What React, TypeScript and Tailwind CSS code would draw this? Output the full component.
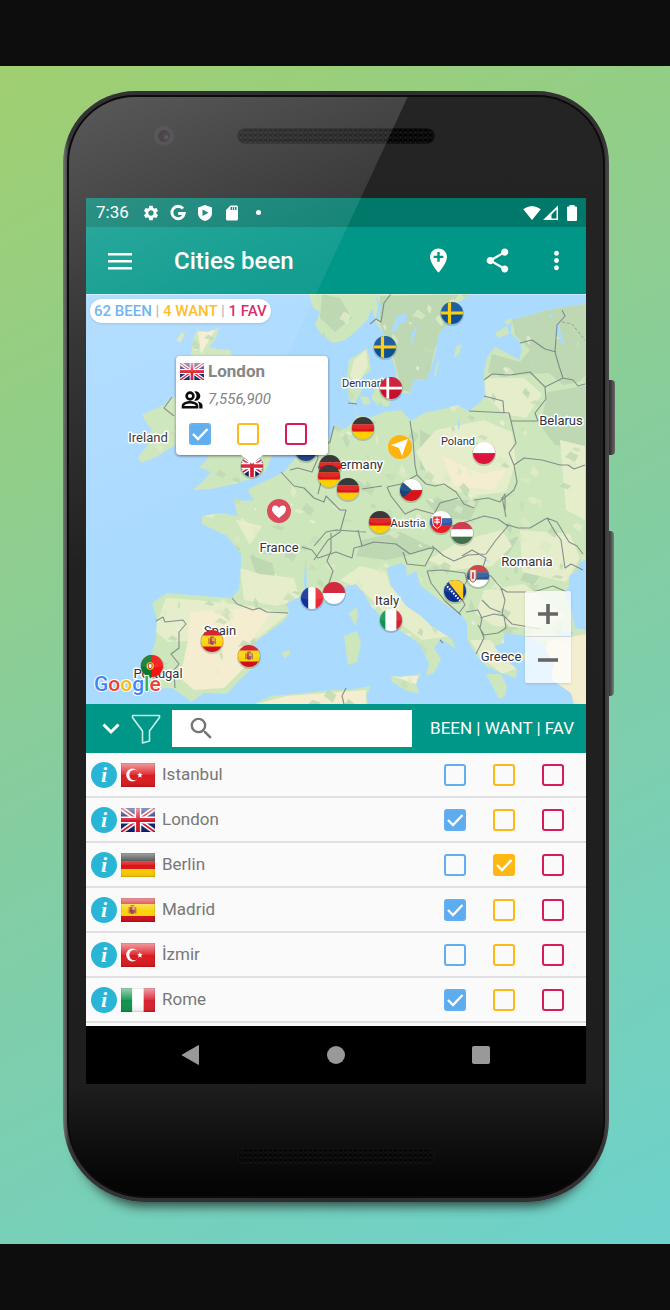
import { useId, useState, type ReactNode } from "react";
import {
  MdAddLocation,
  MdMoreVert,
  MdSdStorage,
  MdSearch,
  MdSettings,
  MdShare,
  MdSignalWifi4Bar,
} from "react-icons/md";

type Mark = "been" | "want" | "fav";
type City = { name: string; flag: string; marks: Mark[] };

const MARKS: Mark[] = ["been", "want", "fav"];

const CITIES: City[] = [
  { name: "Istanbul", flag: "tr", marks: [] },
  { name: "London", flag: "gb", marks: ["been"] },
  { name: "Berlin", flag: "de", marks: ["want"] },
  { name: "Madrid", flag: "es", marks: ["been"] },
  { name: "İzmir", flag: "tr", marks: [] },
  { name: "Rome", flag: "it", marks: ["been"] },
];

/* ---------- Flags: every flag is drawn in a 36 x 24 box ---------- */

const bars = (a: string, b: string, c: string) => (
  <>
    <path fill={a} d="M0 0h36v8H0z" />
    <path fill={b} d="M0 8h36v8H0z" />
    <path fill={c} d="M0 16h36v8H0z" />
  </>
);

const columns = (a: string, b: string, c: string) => (
  <>
    <path fill={a} d="M0 0h12v24H0z" />
    <path fill={b} d="M12 0h12v24H12z" />
    <path fill={c} d="M24 0h12v24H24z" />
  </>
);

const spanishArms = (
  <g>
    <path fill="#a5622a" d="M8 9h1.200v6.500H8zM15 9h1.200v6.500H15z" />
    <path fill="#b8352c" d="M9.500 9h5v4.500q0 2.500-2.500 2.500t-2.500-2.500z" />
    <path fill="#e8a13a" d="M12 9h2.500v3H12z" />
    <path fill="#8c4fa0" d="M12 12h2.500v1.500q0 2-2.500 2.500z" />
    <path fill="#a5622a" d="M9.500 8.600q0-1.800 2.500-1.800t2.500 1.800z" />
  </g>
);

const FLAGS: Record<string, ReactNode> = {
  de: bars("#262626", "#dd1414", "#ffce00"),
  nl: bars("#c8102e", "#ffffff", "#21468b"),
  hu: bars("#cd2a3e", "#ffffff", "#436f4d"),
  it: columns("#0f934c", "#ffffff", "#d9202f"),
  fr: (
    <>
      <path fill="#14309a" d="M0 0h14v24H0z" />
      <path fill="#fff" d="M14 0h8v24h-8z" />
      <path fill="#ef2636" d="M22 0h14v24H22z" />
    </>
  ),
  mc: (
    <>
      <path fill="#cf142b" d="M0 0h36v12H0z" />
      <path fill="#fff" d="M0 12h36v12H0z" />
    </>
  ),
  pl: (
    <>
      <path fill="#fff" d="M0 0h36v12H0z" />
      <path fill="#dc143c" d="M0 12h36v12H0z" />
    </>
  ),
  se: (
    <>
      <path fill="#0b5197" d="M0 0h36v24H0z" />
      <path fill="#fecb00" d="M12.500 0H16v24h-3.500zM0 10.300h36v3.400H0z" />
    </>
  ),
  dk: (
    <>
      <path fill="#c8102e" d="M0 0h36v24H0z" />
      <path fill="#fff" d="M12 0h3v24h-3zM0 10.500h36v3H0z" />
    </>
  ),
  cz: (
    <>
      <path fill="#fff" d="M0 0h36v12H0z" />
      <path fill="#d7141a" d="M0 12h36v12H0z" />
      <path fill="#11457e" d="M2 0l14 12L2 24z" />
    </>
  ),
  es: (
    <>
      <path fill="#d0101c" d="M0 0h36v24H0z" />
      <path fill="#fbd30a" d="M0 6h36v12H0z" />
      {spanishArms}
    </>
  ),
  pt: (
    <>
      <path fill="#f51313" d="M0 0h36v24H0z" />
      <path fill="#0b7a2e" d="M0 0h17v24H0z" />
      <circle cx="15" cy="12" r="4" fill="#f3d322" />
      <path fill="#fff" stroke="#d11" strokeWidth="1" d="M13 9.500h4v3.500q0 1.800-2 1.800t-2-1.800z" />
    </>
  ),
  sk: (
    <>
      {bars("#ffffff", "#2a56ab", "#ee1c25")}
      <path fill="#ee1c25" stroke="#fff" strokeWidth="1" d="M9 5.500h9.500V13q0 4-4.700 6Q9 17 9 13z" />
      <path fill="#fff" d="M13.100 7h1.300v1.800h2v1.200h-2v1.500h2.500v1.200h-2.500v2h-1.300v-2h-2.500v-1.200h2.500V10h-2V8.800h2z" />
    </>
  ),
  rs: (
    <>
      {bars("#c6363c", "#2f5795", "#ffffff")}
      <path fill="#f2e6d8" stroke="#b4483c" strokeWidth="1" d="M8 5h7v9q0 4-3.500 5Q8 18 8 14z" />
      <path fill="#c6363c" d="M10.500 8h2v7h-2z" />
    </>
  ),
  ba: (
    <>
      <path fill="#0b2f8f" d="M0 0h36v24H0z" />
      <path fill="#fcc917" d="M9 0h18v23z" />
      <path stroke="#fff" strokeWidth="2.200" strokeDasharray="1.800 1.500" d="M5 2l20 22" />
    </>
  ),
  tr: (
    <>
      <path fill="#dc1a20" d="M0 0h36v24H0z" />
      <circle cx="12" cy="12" r="6.500" fill="#fff" />
      <circle cx="14" cy="12" r="5.200" fill="#dc1a20" />
      <path fill="#fff" d="M20 9l.8 2.100 2.200.1-1.700 1.400.6 2.200-1.900-1.200-1.900 1.200.6-2.200-1.700-1.400 2.200-.1z" />
    </>
  ),
  gb: (
    <>
      <path fill="#10206f" d="M0 0h36v24H0z" />
      <path stroke="#fff" strokeWidth="5" d="M0 0l36 24M36 0L0 24" />
      <path stroke="#d8182c" strokeWidth="1.800" d="M0 0l36 24M36 0L0 24" />
      <path stroke="#fff" strokeWidth="7" d="M18 0v24M0 12h36" />
      <path stroke="#d8182c" strokeWidth="4" d="M18 0v24M0 12h36" />
    </>
  ),
};

function RectFlag({ code, className }: { code: string; className: string }) {
  const id = useId();
  return (
    <svg viewBox="0 0 36 24" preserveAspectRatio="none" className={className} aria-hidden="true">
      <defs>
        <linearGradient id={id} x1="0" y1="0" x2="0" y2="1">
          <stop offset="0" stopColor="#fff" stopOpacity=".58" />
          <stop offset=".5" stopColor="#fff" stopOpacity=".08" />
          <stop offset=".52" stopColor="#fff" stopOpacity="0" />
          <stop offset="1" stopColor="#000" stopOpacity=".1" />
        </linearGradient>
      </defs>
      {FLAGS[code]}
      <path fill={`url(#${id})`} stroke="#000" strokeOpacity=".18" d="M0 0h36v24H0z" />
    </svg>
  );
}

const PINS: { code: string; x: number; y: number }[] = [
  { code: "se", x: 452, y: 313 },
  { code: "se", x: 385, y: 347 },
  { code: "dk", x: 391, y: 388 },
  { code: "nl", x: 306, y: 450 },
  { code: "de", x: 363, y: 428 },
  { code: "de", x: 330, y: 466 },
  { code: "de", x: 329, y: 476 },
  { code: "de", x: 348, y: 489 },
  { code: "de", x: 380, y: 522 },
  { code: "pl", x: 484, y: 453 },
  { code: "cz", x: 411, y: 490 },
  { code: "sk", x: 441, y: 522 },
  { code: "hu", x: 462, y: 533 },
  { code: "rs", x: 478, y: 576 },
  { code: "ba", x: 455, y: 591 },
  { code: "it", x: 391, y: 620 },
  { code: "mc", x: 334, y: 593 },
  { code: "fr", x: 312, y: 598 },
  { code: "es", x: 212, y: 641 },
  { code: "es", x: 249, y: 656 },
  { code: "pt", x: 152, y: 666 },
  { code: "gb", x: 252, y: 466 },
];

/* Left edge of the 24-unit square shown inside a round pin. */
const PIN_CROP: Record<string, number> = { es: 0, pt: 5, se: 5, dk: 5, cz: 3, rs: 5 };

function Pin({ code, x, y }: { code: string; x: number; y: number }) {
  return (
    <g transform={`translate(${x} ${y})`}>
      <circle cy="1" r="12" fill="#000" fillOpacity=".16" />
      <g clipPath="url(#pin-clip)">
        <svg x="-11" y="-11" width="22" height="22" viewBox={`${PIN_CROP[code] ?? 6} 0 24 24`}>
          {FLAGS[code]}
        </svg>
        <path fill="#fff" fillOpacity=".09" d="M-11 -11h22V0Q0 3-11 0z" />
      </g>
    </g>
  );
}

/* ---------- Map ---------- */

const CONTINENT =
  "M334 425L344 429 350 425 357 417 354 403 349 400 347 377 349 360 357 355 367 348 369 357 371 370 359 380 362 390 355 403 357 416 372 417 384 412 401 410 411 421 424 413 447 408 457 405 469 411 480 402 485 397 484 373 487 357 495 347 507 353 519 360 522 350 520 342 511 333 512 320 531 315 547 310 564 307 585 304V560L579 563 578 570 569 576 569 586 564 595 572 612 575 628 586 630V704H574L571 693 551 679 554 663 541 643 528 636 504 633 504 643 494 646 501 656 517 669 516 678 501 673 486 666 477 656 467 639 467 623 461 614 447 606 434 596 421 586 416 571 407 576 406 566 401 563 387 568 391 586 406 606 421 616 431 626 452 639 456 649 441 639 434 648 441 659 434 673 426 676 429 663 424 653 419 643 404 633 387 623 371 606 364 593 356 584 347 586 331 599 317 603 301 596 287 603 289 613 284 621 259 639 250 650 259 663 244 676 237 683 227 694 204 693 191 702 184 696 172 688 152 689 149 669 151 656 156 639 157 620 152 603 167 593 201 596 232 598 239 589 241 566 241 554 227 536 202 524 202 516 221 513 237 516 234 498 244 501 254 500 247 490 261 483 284 472 291 463 297 457 317 447 331 437z";

const ISLANDS = [
  "M309 294L313 308 320 312 315 325 322 335 333 343 345 340 354 333 367 320 372 308 376 323 384 333 389 350 396 370 397 387 401 393 410 393 414 380 427 379 432 365 436 350 439 333 447 325 461 315 457 303 471 294z",
  "M142 415L150 411 164 405 172 397 185 400 190 420 182 440 172 447 158 456 142 463 138 458 149 443 146 436 152 430 146 422z",
  "M191 353L193 340 197 330 207 332 219 328 216 338 209 347 218 349 231 350 233 370 250 405 270 425 280 445 269 462 266 470 260 476 241 482 225 486 211 489 192 490 201 483 211 472 199 467 205 462 209 455 200 420 195 380z",
  "M176 340L182 332 185 334 180 343z",
  "M454 358L456 347 462 344 459 354z",
  "M434 375L438 360 439 363 435 378z",
  "M371 398L378 382 386 384 394 392 388 407 378 405z",
  "M360 396L368 397 371 404 364 405z",
  "M495 333L507 326 509 334 498 338z",
  "M504 322L510 318 513 321 508 325z",
  "M391 676L401 677 421 674 416 684 419 693 407 691 392 682z",
  "M344 636L357 631 361 643 357 662 348 665 346 650z",
  "M349 613L357 607 358 617 355 626z",
  "M486 674L501 674 507 686 505 696 499 699 494 689z",
  "M281 653L289 650 291 653 285 658z",
  "M254 704L271 696 294 694 334 690 347 690 371 686 366 696 369 704z",
  "M520 655L527 653 528 661 522 659z",
];

const LAND = [CONTINENT, ...ISLANDS].join("");

const FOREST =
  "M380 296L472 294 457 318 435 348 428 379 414 380 410 392 402 390 393 355 380 325zM512 316L585 296V376L579 382 563 385 549 373 519 375 503 377 488 372 492 354 520 362 530 350 515 335zM548 392L585 386V450L555 445 540 425zM322 294L340 298 352 318 335 332 320 318zM362 540L400 532 434 548 406 556 386 560 356 556zM520 580L540 545 556 550 534 585zM500 545L520 535 505 560zM425 500L480 500 470 520 440 518zM250 555L272 563 276 577 256 574zM420 430L440 440 436 470 420 470z";

const MEADOW =
  "M436 430L484 420 512 432 516 462 506 492 472 496 432 482 416 452zM240 568L260 574 294 578 300 600 276 606 244 600zM166 598L196 600 252 606 288 614 258 638 168 642 154 630zM362 590L382 610 422 640 452 636 424 610 390 586 386 572 360 566 340 580zM428 560L462 540 502 530 512 546 492 566 452 570zM484 590L524 584 564 616 534 628 494 626 476 614zM520 530L570 534 580 558 566 582 522 572zM484 378L524 378 542 394 526 418 504 414 486 396zM354 360L366 350 368 366 358 384 350 376zM470 640L490 640 518 668 502 674 480 656zM560 440L585 446V520L566 510zM236 520L262 526 250 545z";

const ARID =
  "M190 612L250 608 270 614 252 640 248 664 224 688 194 690 180 678 188 640zM392 676L418 676 416 684zM545 642L586 634V704H573L553 680zM256 704L286 696 366 690V704zM198 332L215 330 201 354zM442 456L482 474 508 468 494 490 454 486z";

const BORDERS =
  "M391 294l-7 9-3 19-5-3-6 5M520 343l12-3 13 9 11 3M562 310l3 6-8 9-2 27 4 14 4 12M484 380l8-6 18 1 20-3 15 15 18-9 10 2 5 6 7-2M545 387l1 12-11 14 3 8-8 0-19 0M484 396l19 5 1 12M469 411l40 2 2 8 5 22-7 10 5 12 3 17-3 8-12 10M514 465l10-7 18 2 18 5 8 0 6 4 11-4M410 421l3 19 2 25 2 10M387 487l14-3 16-9 9 9 9 2 9-2 12 8 8 12 10 4M387 487l4 9 14 18 11-5 18 5 6-11 18-5M474 500l14-2 12 4 5-8 0 16M434 514v10l18 2 20-6 12-4 14 3 10 7-12 14-10 14-18 1-14 6-10-5-12-10M505 524l13 4 12 0 17-10 10 4 12 20 8 4 6 8M547 518l8 14 6 8 4 28 6-4 12 6M501 588l6 4 26 0 20-6 14 6M501 588l-10-12-12-2M501 588l4 12-3 14 10 10 28 5M362 546l12-4 22 2 14 10 20-6 4 1M358 530l4 16-8 2-2 10-16-6-18 6-6-8-10-3M314 546l12-14 10-2 30 2M403 552l4 12 18 2 9-17M427 571l14-1 24 3 2 8-8 12 6 12-6 8M427 571l4 12 14 18 16 14M466 612l12-2 4 8-2 10 4 10-8 16M480 618l14-4 10 2 2 12-8 5-14 2-6-10M482 600l8 8 10 4M462 556l10-6 14 8-4 12M232 598l5 6 16 6 6-2 8 4 21 1M156 621l7-4 2 5 18-2 3 4-7 8 0 16-8 6 8 10-5 6 1 18M281 472l13 14 10 2 10 10 10 4 2-6 14 14 6 0-6 22-12 8-14 20M290 470l8-2 14 4 6-14-2-8 14-8 4-16M318 466l4 12-4 16M331 533v18l-4 10 6 10-4 12 6 12M348 403l9 1M172 397l-8 11 10 8M346 688l-4 8 2 8M362 489l20-3M502 497l4 20M440 640l3 3";

/* Repeatable scatter of small terrain facets. */
function facets() {
  let seed = 41;
  const next = () => {
    seed = (seed * 16807) % 2147483647;
    return seed / 2147483647;
  };
  const colours = ["#bcd7b2", "#e6edcb", "#bcd7b2", "#d9e9c4", "#c4ddb6", "#eef0e0"];
  return Array.from({ length: 480 }, () => {
    const x = 92 + next() * 490;
    const y = 296 + next() * 406;
    const w = 3 + next() * 11;
    const h = 2 + next() * 7;
    const colour = colours[Math.floor(next() * colours.length)];
    const r = colour === "#eef0e0" ? 0.5 : 1;
    const p = (a: number, b: number) => `${(x + a * w * r).toFixed(1)} ${(y + b * h * r).toFixed(1)}`;
    return {
      colour,
      d: `M${p(0, next())}L${p(0.4, -0.4)}L${p(1, next() * 0.6)}L${p(0.7, 1.2)}L${p(0.3, 0.7)}z`,
    };
  });
}
const FACETS = facets();

const LABELS: [string, number, number, number][] = [
  ["Denmark", 364, 387, 11],
  ["Germany", 357, 469, 13],
  ["Poland", 458, 445, 11],
  ["Belarus", 561, 425, 13],
  ["Ireland", 148, 442, 13],
  ["France", 279, 552, 13],
  ["Austria", 408, 527, 11],
  ["Romania", 527, 566, 13],
  ["Italy", 387, 605, 13],
  ["Greece", 501, 661, 13],
  ["Spain", 220, 635, 13],
  ["Portugal", 158, 678, 13],
];

const LOGO: [string, string][] = [
  ["G", "#4285f4"],
  ["o", "#ea4335"],
  ["o", "#fbbc05"],
  ["g", "#4285f4"],
  ["l", "#34a853"],
  ["e", "#ea4335"],
];

function EuropeMap() {
  return (
    <svg viewBox="86 294 500 410" className="block h-full w-full" role="img" aria-label="Map of Europe">
      <defs>
        <clipPath id="land-clip">
          <path d={LAND} />
        </clipPath>
        <clipPath id="pin-clip">
          <circle r="11" />
        </clipPath>
      </defs>
      <path fill="#abdaff" d="M86 294h500v410H86z" />
      <path fill="#cde6bc" d={LAND} />
      <g clipPath="url(#land-clip)">
        <path fill="#bdd8b3" d={FOREST} />
        <path fill="#e5edcb" d={MEADOW} />
        <path fill="#f4edd0" d={ARID} />
        {FACETS.map((f, i) => (
          <path key={i} fill={f.colour} fillOpacity=".75" d={f.d} />
        ))}
        <g fill="#abdaff">
          <path d="M391 331l6-15 9-3 1 8-7 3-6 9zM410 347l2-14 6-9-4 14zM375 294l3 12-2 12 3 2 2-14zM555 328l4-5 2 12 4 10-4-2zM306 555l1 42-2 2-1-20zM458 418l2 8-2 4zM478 557l14 5-6-1zM558 632l16 0-4 5-14-1zM552 318l-3-2 4-4z" />
        </g>
      </g>
      <path
        fill="none"
        stroke="#767f80"
        strokeOpacity=".85"
        strokeWidth="1.100"
        strokeLinejoin="round"
        d={BORDERS}
      />
      <path
        fill="none"
        stroke="#767f80"
        strokeOpacity=".6"
        strokeDasharray="3 2"
        d="M562 322l10 2 8 10 5 6"
      />
      {LABELS.map(([name, x, y, size]) => (
        <text
          key={name}
          x={x}
          y={y}
          fontSize={size}
          textAnchor="middle"
          fill="#2f3438"
          stroke="#fff"
          strokeWidth="3"
          strokeLinejoin="round"
          paintOrder="stroke"
        >
          {name}
        </text>
      ))}
      <g transform="translate(400 447)">
        <circle r="12" fill="#ffb310" />
        <path fill="#fff" d="M8-8L2 9-1 1-9-2z" />
      </g>
      <g transform="translate(279 511)">
        <circle r="12" fill="#dd4a5c" />
        <path
          fill="#fff"
          d="M0 7C-5 3-7 1-7-2c0-4 5-5 7-1 2-4 7-3 7 1C7 1 5 3 0 7z"
        />
      </g>
      {PINS.map((p) => (
        <Pin key={`${p.x}-${p.y}`} {...p} />
      ))}
      <text x="94" y="691" fontSize="21" fontWeight="500" stroke="#fff" strokeWidth="2" paintOrder="stroke">
        {LOGO.map(([letter, colour], i) => (
          <tspan key={i} fill={colour}>
            {letter}
          </tspan>
        ))}
      </text>
    </svg>
  );
}

/* ---------- Controls ---------- */

const BOX: Record<Mark, string> = {
  been: "border-[#62aef0] checked:bg-[#5cacee]",
  want: "border-[#fdb813] checked:bg-[#fdb813]",
  fav: "border-[#d81b60] checked:bg-[#d81b60]",
};

function MarkBoxes({
  city,
  marks,
  onToggle,
  className,
}: {
  city: string;
  marks: Mark[];
  onToggle: (mark: Mark) => void;
  className: string;
}) {
  return (
    <div className={`grid grid-cols-3 justify-items-center ${className}`}>
      {MARKS.map((mark) => (
        <label key={mark} className="relative block size-[22px]">
          <input
            type="checkbox"
            aria-label={`${city} ${mark}`}
            checked={marks.includes(mark)}
            onChange={() => onToggle(mark)}
            className={`peer block size-[22px] appearance-none rounded-[3px] border-2 ${BOX[mark]}`}
          />
          <svg
            viewBox="0 0 22 22"
            className="pointer-events-none absolute inset-0 hidden peer-checked:block"
            aria-hidden="true"
          >
            <path d="M4 11l5 5 9.500-10" fill="none" stroke="#fff" strokeWidth="2.400" />
          </svg>
        </label>
      ))}
    </div>
  );
}

function PeopleIcon() {
  return (
    <svg viewBox="0 0 24 24" className="size-6" aria-hidden="true">
      <circle cx="10" cy="8" r="3.400" fill="none" stroke="#000" strokeWidth="2.600" />
      <path d="M3 19.200v-1.600C3 15.400 7 14.200 10 14.200s7 1.200 7 3.400v1.600z" fill="none" stroke="#000" strokeWidth="2.600" />
      <path d="M14.300 3.500a4.700 4.700 0 1 1 0 9q2.200-2 2.200-4.500t-2.200-4.500zM17.500 13.500c3 .6 5 1.900 5 4v3h-3.300v-3q0-2.300-1.700-4z" />
    </svg>
  );
}

function StatusBar() {
  return (
    <div className="flex h-[29px] items-center bg-[#00796b] pr-[5px] pl-[10px] text-[17px] leading-none text-white">
      <span className="w-[46px]">7:36</span>
      <div className="flex items-center gap-[9px]">
        <MdSettings className="size-[18px]" />
        <svg viewBox="0 0 18 18" className="size-[18px]" aria-hidden="true">
          <path d="M14 4.700A6.200 6.200 0 1 0 15.200 9.500H9.200" fill="none" stroke="#fff" strokeWidth="2.900" />
        </svg>
        <svg viewBox="0 0 18 18" className="size-[18px]" aria-hidden="true">
          <path
            fill="#fff"
            fillRule="evenodd"
            d="M9 1l7 2.500V9c0 4-3 7-7 8-4-1-7-4-7-8V3.500zM6.500 5.500v6.500l6-3.200z"
          />
        </svg>
        <MdSdStorage className="size-[18px]" />
        <span className="ml-[6px] size-[5px] rounded-full bg-white" />
      </div>
      <div className="ml-auto flex items-center">
        <MdSignalWifi4Bar className="size-[18px]" />
        <svg viewBox="0 0 18 18" className="size-[18px]" aria-hidden="true">
          <path fill="#fff" fillRule="evenodd" d="M2 16L17 1.500V16zM10.500 14.500h5V5.500l-5 5z" />
        </svg>
        <svg viewBox="0 0 18 18" className="ml-1 size-[18px]" aria-hidden="true">
          <path fill="#fff" d="M6.500 1h5v1.500h1.500q1 0 1 1V16q0 1-1 1H5q-1 0-1-1V3.500q0-1 1-1h1.500z" />
        </svg>
      </div>
    </div>
  );
}

function AppBar() {
  return (
    <header className="flex h-[67px] items-center bg-[#009688] pr-[15px] pl-[22px] text-white">
      <button type="button" aria-label="Open menu" className="mr-[42px]">
        <svg viewBox="0 0 24 18" className="h-[18px] w-6" aria-hidden="true">
          <path fill="#fff" d="M0 1h24v2.500H0zM0 8h24v2.500H0zM0 15h24v2.500H0z" />
        </svg>
      </button>
      <h1 className="flex-1 text-2xl font-medium">Cities been</h1>
      <div className="flex items-center gap-[30px]">
        <button type="button" aria-label="Add a city">
          <MdAddLocation className="size-[29px]" />
        </button>
        <button type="button" aria-label="Share">
          <MdShare className="size-[29px]" />
        </button>
        <button type="button" aria-label="More options">
          <MdMoreVert className="size-[29px]" />
        </button>
      </div>
    </header>
  );
}

function FilterBar() {
  return (
    <div className="flex h-[49px] items-center bg-[#009688] pl-4">
      <button type="button" aria-label="Collapse the map">
        <svg viewBox="0 0 18 12" className="h-3 w-[18px]" aria-hidden="true">
          <path d="M1.500 1.500L9 9l7.500-7.500" fill="none" stroke="#fff" strokeWidth="3" />
        </svg>
      </button>
      <button type="button" aria-label="Filter" className="ml-[11px]">
        <svg viewBox="0 0 30 30" className="size-[30px]" aria-hidden="true">
          <path
            d="M1.500 1.500h27v2L18.500 17v10l-7 2V17L1.500 3.500z"
            fill="none"
            stroke="#c8efe9"
            strokeWidth="1.600"
            strokeLinejoin="round"
          />
        </svg>
      </button>
      <label className="ml-[11px] flex h-[37px] min-w-0 flex-1 items-center bg-white pl-[15px]">
        <MdSearch className="size-[29px] shrink-0 text-[#757575]" />
        <input type="search" aria-label="Search cities" className="min-w-0 flex-1 px-2 text-base outline-none" />
      </label>
      <span className="mr-3 ml-[18px] text-[17px] whitespace-nowrap text-white">BEEN | WANT | FAV</span>
    </div>
  );
}

function Speaker({ className }: { className: string }) {
  const id = useId();
  return (
    <svg viewBox="0 0 198 16" className={`mx-auto h-4 w-[198px] ${className}`} aria-hidden="true">
      <defs>
        <pattern id={id} width="5" height="5" patternUnits="userSpaceOnUse" x="1">
          <circle cx="2.500" cy="2.500" r="1.400" fill="#000" />
          <circle cx="2.500" cy="4.200" r=".6" fill="#666" fillOpacity=".35" />
        </pattern>
      </defs>
      <rect width="198" height="16" rx="8" fill="#0d0d0d" stroke="#333" strokeOpacity=".35" />
      <rect x="3" width="192" height="16" rx="7" fill={`url(#${id})`} />
    </svg>
  );
}

export default function App() {
  const [cities, setCities] = useState(CITIES);

  const toggle = (name: string, mark: Mark) =>
    setCities((list) =>
      list.map((c) =>
        c.name === name
          ? { ...c, marks: c.marks.includes(mark) ? c.marks.filter((m) => m !== mark) : [...c.marks, mark] }
          : c,
      ),
    );

  const london = cities.find((c) => c.name === "London")!;

  return (
    <div className="min-h-screen bg-[#0d0d0d] py-[66px] font-[Roboto,sans-serif]">
      <main className="bg-linear-[152deg] from-[#a0cf70] via-[#85cda0] to-[#6cd2cc] pt-[25px] pr-[61px] pb-[42px] pl-[63px]">
        <div className="relative rounded-t-[72px] rounded-b-[82px] bg-[linear-gradient(90deg,#77777a_0px,#343436_6px,#2c2c2e_50%,#343233_99%,#4c484a_100%)] p-1 shadow-[0_18px_12px_-14px_rgba(20,20,20,0.75)]">
          <span className="absolute top-[289px] -right-[6px] h-[75px] w-[6px] rounded-r-sm bg-linear-to-r from-[#2a2a2a] to-[#6a6668]" />
          <span className="absolute top-[440px] -right-[5px] h-[165px] w-[5px] rounded-r-sm bg-linear-to-r from-[#333] to-[#77827a]" />

          <div className="rounded-t-[68px] rounded-b-[78px] bg-[#0b0b0b] p-[2px]">
            <div className="relative overflow-hidden rounded-t-[66px] rounded-b-[76px] bg-linear-to-b from-[#242424] from-0% via-[#1e1e1e] via-90% to-[#040404] px-[17px]">
              <div className="relative h-[101px] pt-[31px]">
                <Speaker className="" />
                <span className="absolute top-[29px] left-[68px] grid size-5 place-items-center rounded-full bg-white/5">
                  <span className="size-3 rounded-full bg-[radial-gradient(circle_at_70%_60%,#4a3844_0%,#201a20_30%,#18161a_100%)]" />
                </span>
              </div>

              <div className="bg-black">
                <StatusBar />
                <AppBar />

                <section className="relative aspect-[500/410]">
                  <EuropeMap />
                  <div className="absolute top-0 left-0 h-px w-full bg-white/40" />

                  <p className="absolute top-[5px] left-1 rounded-full bg-white px-1 text-[15px] leading-6 font-medium whitespace-nowrap text-[#b0b0b0] shadow">
                    <span className="text-[#62aef0]">62 BEEN</span> | <span className="text-[#fdb813]">4 WANT</span> |{" "}
                    <span className="text-[#d81b60]">1 FAV</span>
                  </p>

                  <div className="absolute top-[15%] left-[18%] w-[152px] rounded-sm bg-white pt-1 pb-[10px] text-[#808080] shadow-[0_1px_3px_rgba(0,0,0,0.5)]">
                    <div className="flex h-6 items-center gap-1 px-1">
                      <RectFlag code="gb" className="h-[17px] w-6" />
                      <h2 className="text-[17px] font-bold">London</h2>
                    </div>
                    <div className="mt-1 flex h-6 items-center gap-1 px-1">
                      <PeopleIcon />
                      <span className="text-[15px] italic">7,556,900</span>
                    </div>
                    <MarkBoxes
                      city="London on the map"
                      marks={london.marks}
                      onToggle={(mark) => toggle("London", mark)}
                      className="mt-[11px] w-36"
                    />
                    <svg viewBox="0 0 22 10" className="absolute top-full left-[65px] h-[10px] w-[22px]" aria-hidden="true">
                      <path fill="#fff" d="M0 0h22L11 9z" />
                    </svg>
                  </div>

                  <div className="absolute right-[15px] bottom-[21px] flex flex-col divide-y divide-[#d5d5d5] rounded-xs bg-white/75 text-[#666] shadow">
                    <button type="button" aria-label="Zoom in" className="grid size-[46px] place-items-center">
                      <svg viewBox="0 0 20 20" className="size-5" aria-hidden="true">
                        <path fill="#666" d="M8.200 0h3.600v8.200H20v3.600h-8.200V20H8.200v-8.200H0V8.200h8.200z" />
                      </svg>
                    </button>
                    <button type="button" aria-label="Zoom out" className="grid size-[46px] place-items-center">
                      <svg viewBox="0 0 20 20" className="size-5" aria-hidden="true">
                        <path fill="#666" d="M0 8.200h20v3.600H0z" />
                      </svg>
                    </button>
                  </div>
                </section>

                <FilterBar />

                <ul className="bg-[#fafafa] pb-[3px]">
                  {cities.map((city) => (
                    <li
                      key={city.name}
                      className="flex h-[45px] items-center border-b-2 border-[#e0e0e0] pr-[9px] pl-[5px]"
                    >
                      <button
                        type="button"
                        aria-label={`About ${city.name}`}
                        className="grid size-[26px] place-items-center rounded-full bg-[#29b6d6] font-['Liberation_Serif',serif] text-[22px] leading-[22px] font-bold text-white italic"
                      >
                        i
                      </button>
                      <RectFlag code={city.flag} className="mr-[7px] ml-1 h-6 w-[34px]" />
                      <span className="flex-1 text-[17px] text-[#777]">{city.name}</span>
                      <MarkBoxes
                        city={city.name}
                        marks={city.marks}
                        onToggle={(mark) => toggle(city.name, mark)}
                        className="w-[146px]"
                      />
                    </li>
                  ))}
                </ul>

                <nav className="grid h-[58px] grid-cols-3 place-items-center px-8">
                  <button type="button" aria-label="Back">
                    <svg viewBox="0 0 20 20" className="size-5" aria-hidden="true">
                      <path fill="#999" d="M18 .5v19q0 .5-.8.200L1.200 10.600q-.8-.6 0-1.200L17.200.3q.8-.3.8.2z" />
                    </svg>
                  </button>
                  <button type="button" aria-label="Home" className="size-[18px] rounded-full bg-[#999]" />
                  <button type="button" aria-label="Recent apps" className="size-[18px] rounded-xs bg-[#999]" />
                </nav>
              </div>

              <div className="h-[112px] pt-16">
                <Speaker className="opacity-60" />
              </div>

              <svg
                viewBox="0 0 533 560"
                className="pointer-events-none absolute top-0 left-0 w-full"
                aria-hidden="true"
              >
                <defs>
                  <linearGradient id="glare" gradientUnits="userSpaceOnUse" x1="20" y1="0" x2="190" y2="400">
                    <stop offset="0" stopColor="#fff" stopOpacity=".24" />
                    <stop offset=".5" stopColor="#fff" stopOpacity=".09" />
                    <stop offset="1" stopColor="#fff" stopOpacity="0" />
                  </linearGradient>
                </defs>
                <path fill="url(#glare)" d="M0 0h338L78 560H0z" />
              </svg>
            </div>
          </div>
        </div>
      </main>
    </div>
  );
}
